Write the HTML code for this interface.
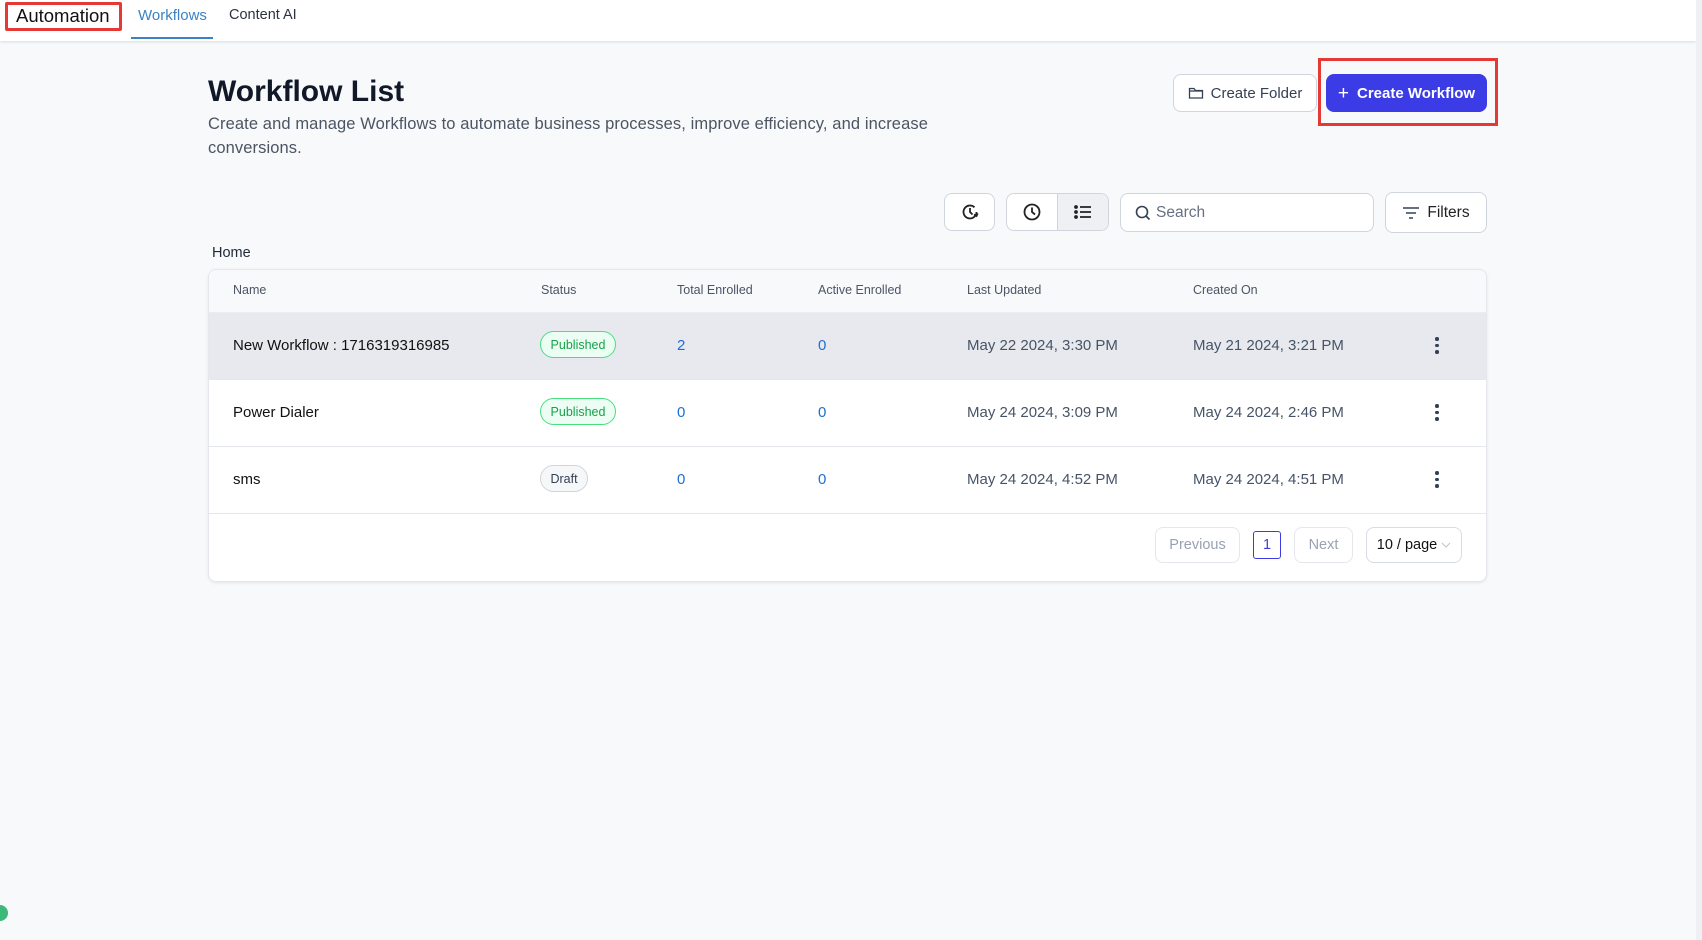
<!DOCTYPE html>
<html><head><meta charset="utf-8"><style>
*{box-sizing:border-box;margin:0;padding:0}
body{width:1702px;height:940px;background:#f8f9fb;font-family:"Liberation Sans",sans-serif;position:relative;overflow:hidden;color:#111827}
.abs{position:absolute}
.hdr{left:0;top:0;width:1696px;height:41px;background:#fff;box-shadow:0 1px 3px rgba(0,0,0,.12)}
.strip{left:1696px;top:0;width:6px;height:940px;background:#eef0f6}
.btn{position:absolute;background:#fff;border:1px solid #d0d5dd;border-radius:8px;display:flex;align-items:center;justify-content:center;font-size:15px;color:#344054}
.th{position:absolute;top:283px;font-size:12.5px;color:#4b5563}
.td{position:absolute;font-size:15px;color:#475467}
.num{color:#1d6fd6}
.badge{position:absolute;height:27px;border-radius:14px;font-size:12.5px;display:flex;align-items:center;justify-content:center}
.pub{background:#ecfdf3;border:1.5px solid #4ade80;color:#16a34a;width:76px}
.dr{background:#f6f7f9;border:1px solid #d0d5dd;color:#344054;width:48px}
.dots{position:absolute;left:1435px;width:4px}
.dots i{display:block;width:3.5px;height:3.5px;border-radius:50%;background:#344054;margin-bottom:3px}
</style></head><body>
<div class="abs hdr"></div>
<div class="abs strip"></div>
<div class="abs" style="left:5px;top:2px;width:117px;height:29px;border:3px solid #e53935;border-radius:2px"></div>
<div class="abs" style="left:16px;top:5px;font-size:18.5px;color:#111">Automation</div>
<div class="abs" style="left:138px;top:7px;font-size:15px;color:#3b82c4">Workflows</div>
<div class="abs" style="left:131px;top:37px;width:82px;height:2px;background:#3b82c4"></div>
<div class="abs" style="left:229px;top:7px;font-size:14.5px;color:#2d3340">Content AI</div>

<div class="abs" style="left:208px;top:75px;font-size:30px;font-weight:600;color:#111827">Workflow List</div>
<div class="abs" style="left:208px;top:112px;font-size:16.5px;line-height:24px;color:#4b5563;width:760px;letter-spacing:0.1px">Create and manage Workflows to automate business processes, improve efficiency, and increase conversions.</div>

<div class="btn" style="left:1173px;top:74px;width:144px;height:38px"><svg width="16" height="16" viewBox="0 0 16 16" fill="none" stroke="#344054" stroke-width="1.3" style="margin-right:7px"><path d="M1.5 3.5v9.5h13V5.5H7.5L6 3.5z"/><path d="M1.5 6h13"/></svg>Create Folder</div>
<div class="abs" style="left:1318px;top:58px;width:180px;height:68px;border:3px solid #e53935"></div>
<div class="btn" style="left:1326px;top:74px;width:161px;height:38px;background:#3c3ce6;border-color:#3c3ce6;color:#fff;font-weight:600"><span style="font-size:19px;font-weight:400;margin-right:8px;margin-top:1px">+</span>Create Workflow</div>

<div class="btn" style="left:944px;top:193px;width:51px;height:38px"><svg width="20" height="20" viewBox="0 0 20 20" fill="none" stroke="#222" stroke-width="1.8"><path d="M16.5 10a6.5 6.5 0 1 1-2-4.7"/><path d="M10 6v4l2.5 2.5"/><path d="M14 12.5l2.5 1.5 1.2-2.6"/></svg></div>
<div class="btn" style="left:1006px;top:193px;width:103px;height:38px;overflow:hidden;justify-content:flex-start">
<div style="width:52px;height:100%;display:flex;align-items:center;justify-content:center;border-right:1px solid #d0d5dd"><svg width="20" height="20" viewBox="0 0 20 20" fill="none" stroke="#222" stroke-width="1.8"><circle cx="10" cy="10" r="7.5"/><path d="M10 5.5V10l3 2.5"/></svg></div>
<div style="width:51px;height:100%;background:#eef0f4;display:flex;align-items:center;justify-content:center"><svg width="18" height="16" viewBox="0 0 18 16" stroke="#222" stroke-width="1.8"><path d="M6 3h11M6 8h11M6 13h11"/><circle cx="2" cy="3" r="1" fill="#222"/><circle cx="2" cy="8" r="1" fill="#222"/><circle cx="2" cy="13" r="1" fill="#222"/></svg></div></div>
<div class="btn" style="left:1120px;top:193px;width:254px;height:39px;justify-content:flex-start;padding-left:14px;color:#667085;font-size:15.5px"><svg width="16" height="16" viewBox="0 0 16 16" fill="none" stroke="#344054" stroke-width="1.6" style="margin-right:5px"><circle cx="7" cy="7" r="5.5"/><path d="M11 11l3.5 3.5"/></svg>Search</div>
<div class="btn" style="left:1385px;top:192px;width:102px;height:41px;font-size:15.5px;color:#222"><svg width="18" height="14" viewBox="0 0 18 14" stroke="#344054" stroke-width="1.6" style="margin-right:7px"><path d="M1 2h16M4 7h10M7 12h4"/></svg>Filters</div>

<div class="abs" style="left:212px;top:245px;font-size:14.5px;color:#1f2937">Home</div>

<div class="abs" style="left:208px;top:269px;width:1279px;height:313px;background:#fff;border:1px solid #e4e7ec;border-radius:8px;box-shadow:0 1px 3px rgba(0,0,0,.08);overflow:hidden">
<div style="height:43px;background:#f8f9fb;border-bottom:1px solid #eaecf0"></div>
<div style="height:67px;background:#e8e9ee;border-bottom:1px solid #e4e7ec"></div>
<div style="height:67px;border-bottom:1px solid #e4e7ec"></div>
<div style="height:67px;border-bottom:1px solid #e4e7ec"></div>
</div>
<div class="th" style="left:233px">Name</div>
<div class="th" style="left:541px">Status</div>
<div class="th" style="left:677px">Total Enrolled</div>
<div class="th" style="left:818px">Active Enrolled</div>
<div class="th" style="left:967px">Last Updated</div>
<div class="th" style="left:1193px">Created On</div>

<div class="td" style="left:233px;top:337px;color:#111">New Workflow : 1716319316985</div>
<div class="badge pub" style="left:540px;top:331px">Published</div>
<div class="td num" style="left:677px;top:337px">2</div>
<div class="td num" style="left:818px;top:337px">0</div>
<div class="td" style="left:967px;top:337px">May 22 2024, 3:30 PM</div>
<div class="td" style="left:1193px;top:337px">May 21 2024, 3:21 PM</div>
<div class="dots" style="top:337px"><i></i><i></i><i></i></div>

<div class="td" style="left:233px;top:404px;color:#111">Power Dialer</div>
<div class="badge pub" style="left:540px;top:398px">Published</div>
<div class="td num" style="left:677px;top:404px">0</div>
<div class="td num" style="left:818px;top:404px">0</div>
<div class="td" style="left:967px;top:404px">May 24 2024, 3:09 PM</div>
<div class="td" style="left:1193px;top:404px">May 24 2024, 2:46 PM</div>
<div class="dots" style="top:404px"><i></i><i></i><i></i></div>

<div class="td" style="left:233px;top:471px;color:#111">sms</div>
<div class="badge dr" style="left:540px;top:465px">Draft</div>
<div class="td num" style="left:677px;top:471px">0</div>
<div class="td num" style="left:818px;top:471px">0</div>
<div class="td" style="left:967px;top:471px">May 24 2024, 4:52 PM</div>
<div class="td" style="left:1193px;top:471px">May 24 2024, 4:51 PM</div>
<div class="dots" style="top:471px"><i></i><i></i><i></i></div>

<div class="btn" style="left:1155px;top:527px;width:85px;height:36px;border-color:#e4e7ec;color:#98a2b3;font-size:14.5px">Previous</div>
<div class="btn" style="left:1253px;top:531px;width:28px;height:28px;border-color:#3c3ce6;border-radius:3px;color:#3c3ce6;font-size:14.5px">1</div>
<div class="btn" style="left:1294px;top:527px;width:59px;height:36px;border-color:#e4e7ec;color:#98a2b3;font-size:14.5px">Next</div>
<div class="btn" style="left:1366px;top:527px;width:96px;height:36px;border-color:#d8dce3;color:#111;font-size:14.5px">10 / page<svg width="10" height="6" viewBox="0 0 10 6" fill="none" stroke="#c0c4cc" style="margin-left:4px"><path d="M1 1l4 4 4-4"/></svg></div>

<div class="abs" style="left:-8px;top:905px;width:16px;height:16px;border-radius:50%;background:#3cb878"></div>
</body></html>
